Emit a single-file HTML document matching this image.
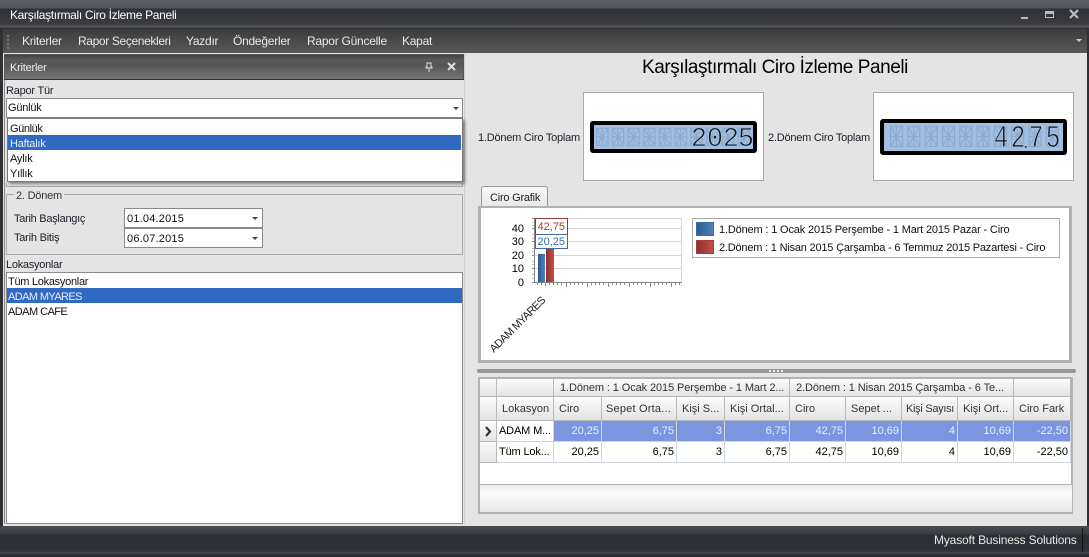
<!DOCTYPE html>
<html><head><meta charset="utf-8"><style>
html,body{margin:0;padding:0;width:1089px;height:557px;overflow:hidden;background:#e4e4e4}
body{position:relative;font-family:"Liberation Sans",sans-serif;font-size:11px;color:#1c1c28;letter-spacing:-.22px}
.a,.t{position:absolute}
.t{white-space:nowrap;line-height:14px}
.b{background:#fff;border:1px solid #8a8a8a;box-sizing:border-box}
.arr{position:absolute;width:0;height:0;border-left:3px solid transparent;border-right:3px solid transparent;border-top:3px solid #444}
.m{top:34px;color:#e8e8e8;font-size:12px;letter-spacing:-.25px}
.c{position:absolute;box-sizing:border-box;border-right:1px solid #cfd6e2;border-bottom:1px solid #cfd6e2;line-height:20px;padding:0 7px;text-align:right;color:#000;overflow:hidden;white-space:nowrap;letter-spacing:0}
.h{position:absolute;box-sizing:border-box;border-right:1px solid #b9b9b9;border-bottom:1px solid #b9b9b9;background:linear-gradient(#fbfbfb,#e4e4e4);line-height:25px;padding-left:5px;color:#333;white-space:nowrap;overflow:hidden;letter-spacing:0}
.s{background:#7b95df;color:#e8eefc}
</style></head><body>
<!-- frame -->
<div class="a" style="left:0;top:0;width:1089px;height:28px;background:linear-gradient(#5c5f63 0,#50535a 8px,#303237 9px,#3a3c41 24px,#55585c 27px,#3a3c40 28px)"></div>
<div class="t" style="left:10px;top:8px;color:#fff;font-size:12px;letter-spacing:-.32px">Karşılaştırmalı Ciro İzleme Paneli</div>
<div class="a" style="left:1021px;top:17px;width:7px;height:2px;background:#bbb"></div>
<div class="a" style="left:1045px;top:11px;width:9px;height:7px;box-sizing:border-box;border:1px solid #bbb;border-top:3px solid #bbb"></div>
<svg class="a" style="left:1069px;top:9px" width="11" height="10"><path d="M1 1L9 9M9 1L1 9" stroke="#bbb" stroke-width="2.2"/></svg>
<div class="a" style="left:0;top:28px;width:1089px;height:529px;background:#2e3035"></div>
<div class="a" style="left:3px;top:29px;width:1084px;height:24px;background:linear-gradient(#3c3c3c,#585858)"></div>
<svg class="a" style="left:7px;top:34px" width="4" height="15"><path d="M1 1v2M1 5v2M1 9v2M1 13v2" stroke="#777" stroke-width="2"/></svg>
<div class="t m" style="left:22px">Kriterler</div>
<div class="t m" style="left:78px;letter-spacing:-.36px">Rapor Seçenekleri</div>
<div class="t m" style="left:186px">Yazdır</div>
<div class="t m" style="left:233px">Öndeğerler</div>
<div class="t m" style="left:307px">Rapor Güncelle</div>
<div class="t m" style="left:402px">Kapat</div>
<div class="arr" style="left:1076px;top:39px;border-top-color:#ccc"></div>
<div class="a" style="left:3px;top:53px;width:1084px;height:473px;background:#e4e4e4"></div>

<!-- left panel -->
<div class="a" style="left:4px;top:54px;width:460px;height:26px;box-sizing:border-box;border:1px solid #555;border-bottom:1px solid #333;background:linear-gradient(#444 0,#5a5a5a 5px,#565656 10px,#747474 100%)"></div>
<div class="t" style="left:10px;top:61px;color:#eee">Kriterler</div>
<svg class="a" style="left:424px;top:62px" width="10" height="11"><path d="M3 1h4v4h1v1H2V5h1zM5 6v4" stroke="#ddd" fill="none"/></svg>
<svg class="a" style="left:446px;top:62px" width="11" height="10"><path d="M2 1L9 8M9 1L2 8" stroke="#ddd" stroke-width="2"/></svg>
<div class="a" style="left:4px;top:80px;width:1px;height:444px;background:#888"></div>
<div class="a" style="left:464px;top:54px;width:1px;height:470px;background:#cfcfcf"></div>
<div class="t" style="left:6px;top:84px">Rapor Tür</div>
<div class="a b" style="left:6px;top:98px;width:457px;height:20px"></div>
<div class="t" style="left:8px;top:101px;color:#111">Günlük</div>
<div class="arr" style="left:453px;top:107px"></div>
<div class="a" style="left:6px;top:183px;width:457px;height:4px;box-sizing:border-box;border:1px solid #aaa;border-top:0"></div>
<div class="a" style="left:7px;top:118px;width:456px;height:64px;box-sizing:border-box;background:#fff;border:1px solid #777;box-shadow:2px 2px 3px rgba(0,0,0,.45)"></div>
<div class="a" style="left:8px;top:135px;width:453px;height:15px;background:#2f69c2"></div>
<div class="t" style="left:10px;top:122px;color:#111;letter-spacing:-.4px">Günlük</div>
<div class="t" style="left:10px;top:137px;color:#e8eeff">Haftalık</div>
<div class="t" style="left:10px;top:152px;color:#111">Aylık</div>
<div class="t" style="left:10px;top:167px;color:#111">Yıllık</div>

<div class="a" style="left:6px;top:194px;width:457px;height:61px;box-sizing:border-box;border:1px solid #aaa"></div>
<div class="t" style="left:14px;top:189px;background:#e4e4e4;padding:0 2px;color:#333">2. Dönem</div>
<div class="t" style="left:14px;top:212px;letter-spacing:-.27px">Tarih Başlangıç</div>
<div class="t" style="left:14px;top:231px">Tarih Bitiş</div>
<div class="a b" style="left:124px;top:208px;width:139px;height:20px"></div>
<div class="a b" style="left:124px;top:228px;width:139px;height:20px"></div>
<div class="t" style="left:127px;top:212px;color:#111;letter-spacing:.2px">01.04.2015</div>
<div class="t" style="left:127px;top:232px;color:#111;letter-spacing:.2px">06.07.2015</div>
<div class="arr" style="left:252px;top:217px"></div>
<div class="arr" style="left:252px;top:237px"></div>
<div class="t" style="left:6px;top:258px;letter-spacing:-.27px">Lokasyonlar</div>
<div class="a b" style="left:6px;top:272px;width:457px;height:252px"></div>
<div class="a" style="left:7px;top:288px;width:455px;height:15px;background:#2f69c2"></div>
<div class="t" style="left:8px;top:275px;color:#111;letter-spacing:-.28px">Tüm Lokasyonlar</div>
<div class="t" style="left:8px;top:290px;color:#e8eeff;letter-spacing:-.6px">ADAM MYARES</div>
<div class="t" style="left:8px;top:305px;color:#111;letter-spacing:-.55px">ADAM CAFE</div>

<!-- right -->
<div class="t" style="left:642px;top:57px;width:266px;text-align:left;font-size:19px;line-height:22px;color:#000;letter-spacing:-.44px">Karşılaştırmalı Ciro İzleme Paneli</div>
<div class="t" style="left:478px;top:131px">1.Dönem Ciro Toplam</div>
<div class="t" style="left:768px;top:131px">2.Dönem Ciro Toplam</div>
<div class="a" style="left:583px;top:92px;width:181px;height:89px;box-sizing:border-box;background:#fff;border:1px solid #aaa"></div>
<div class="a" style="left:873px;top:92px;width:201px;height:89px;box-sizing:border-box;background:#fff;border:1px solid #aaa"></div>
<svg class="a" style="left:0;top:0;letter-spacing:0" width="1089" height="557">
<defs>
<pattern id="g1" patternUnits="userSpaceOnUse" x="596" y="128" width="15.7" height="18"><path d="M.5.5h11.5v17H.5zM.5 9h11.500M6.200.5v17M.5.5L12 17.500M12 .5L.5 17.500" fill="none" stroke="#8cabd0" stroke-width="1.3"/></pattern>
<pattern id="g2" patternUnits="userSpaceOnUse" x="890" y="126" width="17.3" height="21"><path d="M.5.5h12v20H.5zM.5 10.500h12M6.500.5v20M.5.5L12.500 20.500M12.500 .5L.5 20.500" fill="none" stroke="#8cabd0" stroke-width="1.3"/></pattern>
</defs>
<rect x="592" y="123" width="163" height="28" rx="1" fill="#a3bfdf" stroke="#000" stroke-width="4"/>
<rect x="596" y="128" width="157" height="18" fill="url(#g1)"/>
<rect x="882" y="121" width="183" height="32" rx="1" fill="#a3bfdf" stroke="#000" stroke-width="4"/>
<rect x="890" y="126" width="173" height="21" fill="url(#g2)"/>
<g font-family="Liberation Mono" font-size="27" fill="#111" stroke="#a3bfdf" stroke-width=".8" text-anchor="middle">
<text transform="translate(699,146)">2</text>
<text transform="translate(715,146)">0</text>
<text transform="translate(731,146)">2</text>
<text transform="translate(746,146)">5</text>
<text transform="translate(1001,147) scale(.9,1.15)">4</text>
<text transform="translate(1018,147) scale(.9,1.15)">2</text>
<text transform="translate(1036,147) scale(.9,1.15)">7</text>
<text transform="translate(1053,147) scale(.9,1.15)">5</text>
</g>
<rect x="1025" y="146" width="1.500" height="1.500" fill="#111"/>
</svg>
<!-- tab -->
<div class="a" style="left:481px;top:186px;width:67px;height:21px;box-sizing:border-box;border:1px solid #999;border-bottom:0;border-radius:3px 3px 0 0;background:linear-gradient(#f8f8f8,#e8e8e8)"></div>
<div class="t" style="left:490px;top:191px">Ciro Grafik</div>
<div class="a" style="left:478px;top:206px;width:594px;height:157px;box-sizing:border-box;background:#fff;border:3px solid #b2b2b2;border-top-width:2px"></div>
<svg class="a" style="left:0;top:0;letter-spacing:0" width="1089" height="557" font-family="Liberation Sans" font-size="11">
<path d="M535 218.500H682M535 228.500H682M535 241.500H682M535 255.500H682M535 268.500H682M681.500 218V282" stroke="#d6d6d6" fill="none"/>
<path d="M534.500 218V282.500H682" stroke="#888" fill="none"/>
<path d="M532 218.500h2M532 228.500h3M532 241.500h3M532 255.500h3M532 268.500h3M532 282.500h3M533 222v1M533 225v1M533 234v1M533 238v1M533 248v1M533 251v1M533 261v1M533 264v1M533 274v1M533 278v1" stroke="#888"/>
<path d="M537.500 283v2M541.500 283v2M545.500 283v3M549.500 283v2M553.500 283v2M557.500 283v2M561.500 283v2M566.500 283v4M570.500 283v2M574.500 283v2M578.500 283v2M582.500 283v2M587.500 283v4M591.500 283v2M595.500 283v2M599.500 283v2M603.500 283v2M608.500 283v4M612.500 283v2M616.500 283v2M620.500 283v2M624.500 283v2M629.500 283v4M633.500 283v2M637.500 283v2M641.500 283v2M645.500 283v2M650.500 283v4M654.500 283v2M658.500 283v2M662.500 283v2M666.500 283v2M671.500 283v4M675.500 283v2M679.500 283v2" stroke="#888"/>
<defs><linearGradient id="bl"><stop offset="0" stop-color="#2e5a93"/><stop offset="1" stop-color="#4e82bd"/></linearGradient><linearGradient id="rd"><stop offset="0" stop-color="#8f2f2d"/><stop offset="1" stop-color="#c0504d"/></linearGradient></defs>
<rect x="538" y="254" width="7" height="28" fill="url(#bl)"/>
<rect x="546" y="246" width="8" height="36" fill="url(#rd)"/>
<rect x="535.500" y="218.500" width="32" height="16" fill="#fff" stroke="#8f3a38"/>
<rect x="535.500" y="234.500" width="32" height="14" fill="#fff" stroke="#3f6a9e"/>
<text x="537.500" y="230" fill="#a13d3a">42,75</text>
<text x="537.500" y="245" fill="#3a6aa8">20,25</text>
<g text-anchor="end" fill="#000"><text x="524" y="232">40</text><text x="524" y="245">30</text><text x="524" y="259">20</text><text x="524" y="272">10</text><text x="524" y="286">0</text></g>
<text transform="translate(494,353) rotate(-45)" fill="#222" font-size="11" letter-spacing="-.65">ADAM MYARES</text>
<rect x="692.500" y="218.500" width="367" height="39" fill="#fff" stroke="#aaa"/>
<rect x="696.500" y="222.500" width="17" height="13" fill="url(#bl)" stroke="#3a6aa8"/>
<rect x="696.500" y="240.500" width="17" height="13" fill="url(#rd)" stroke="#a13d3a"/>
<text x="719" y="233" fill="#111" letter-spacing="-.16">1.Dönem : 1 Ocak 2015 Perşembe - 1 Mart 2015 Pazar - Ciro</text>
<text x="719" y="251" fill="#111" letter-spacing="-.2">2.Dönem : 1 Nisan 2015 Çarşamba - 6 Temmuz 2015 Pazartesi - Ciro</text>
</svg>
<!-- splitter -->
<div class="a" style="left:477px;top:369px;width:599px;height:4px;background:#979797;border-radius:2px"></div>
<div class="a" style="left:769px;top:370px;width:14px;height:2px;background:repeating-linear-gradient(90deg,#eee 0 2px,#979797 2px 4px)"></div>
<!-- grid -->
<div class="a" style="left:478px;top:377px;width:595px;height:137px;box-sizing:border-box;background:#fff;border:2px solid #b2b2b2"></div>
<div class="h" style="left:480px;top:379px;width:17px;height:18px"></div>
<div class="h" style="left:497px;top:379px;width:57px;height:18px"></div>
<div class="h" style="left:554px;top:379px;width:236px;height:18px;line-height:18px;padding-left:6px;letter-spacing:-.1px">1.Dönem : 1 Ocak 2015 Perşembe - 1 Mart 2...</div>
<div class="h" style="left:790px;top:379px;width:224px;height:18px;line-height:18px;padding-left:6px;letter-spacing:-.1px">2.Dönem : 1 Nisan 2015 Çarşamba - 6 Te...</div>
<div class="h" style="left:1014px;top:379px;width:57px;height:18px"></div>
<div class="h" style="left:480px;top:397px;width:17px;height:24px"></div>
<div class="h" style="left:497px;top:397px;width:57px;height:24px">Lokasyon</div>
<div class="h" style="left:554px;top:397px;width:48px;height:24px">Ciro</div>
<div class="h" style="left:602px;top:397px;width:75px;height:24px;padding-left:4px;letter-spacing:.2px">Sepet Orta...</div>
<div class="h" style="left:677px;top:397px;width:48px;height:24px">Kişi S...</div>
<div class="h" style="left:725px;top:397px;width:65px;height:24px">Kişi Ortal...</div>
<div class="h" style="left:790px;top:397px;width:56px;height:24px">Ciro</div>
<div class="h" style="left:846px;top:397px;width:56px;height:24px">Sepet ...</div>
<div class="h" style="left:902px;top:397px;width:56px;height:24px;padding-left:4px;letter-spacing:-.3px">Kişi Sayısı</div>
<div class="h" style="left:958px;top:397px;width:56px;height:24px">Kişi Ort...</div>
<div class="h" style="left:1014px;top:397px;width:57px;height:24px">Ciro Fark</div>
<div class="h" style="left:480px;top:421px;width:17px;height:21px"></div>
<div class="h" style="left:480px;top:442px;width:17px;height:21px"></div>
<svg class="a" style="left:484px;top:426px" width="9" height="11"><path d="M2 1L6 5.500L2 10" stroke="#333" stroke-width="2.2" fill="none"/></svg>
<div class="c" style="left:497px;top:421px;width:57px;height:21px;text-align:left;padding:0 2px;letter-spacing:-.15px">ADAM M...</div>
<div class="c s" style="left:554px;top:421px;width:48px;height:21px;padding:0 2px">20,25</div>
<div class="c s" style="left:602px;top:421px;width:75px;height:21px;padding:0 2px">6,75</div>
<div class="c s" style="left:677px;top:421px;width:48px;height:21px;padding:0 2px">3</div>
<div class="c s" style="left:725px;top:421px;width:65px;height:21px;padding:0 2px">6,75</div>
<div class="c s" style="left:790px;top:421px;width:56px;height:21px;padding:0 2px">42,75</div>
<div class="c s" style="left:846px;top:421px;width:56px;height:21px;padding:0 2px">10,69</div>
<div class="c s" style="left:902px;top:421px;width:56px;height:21px;padding:0 2px">4</div>
<div class="c s" style="left:958px;top:421px;width:56px;height:21px;padding:0 2px">10,69</div>
<div class="c s" style="left:1014px;top:421px;width:57px;height:21px;padding:0 2px">-22,50</div>
<div class="c" style="left:497px;top:442px;width:57px;height:21px;text-align:left;padding:0 2px;letter-spacing:-.15px">Tüm Lok...</div>
<div class="c" style="left:554px;top:442px;width:48px;height:21px;padding:0 2px">20,25</div>
<div class="c" style="left:602px;top:442px;width:75px;height:21px;padding:0 2px">6,75</div>
<div class="c" style="left:677px;top:442px;width:48px;height:21px;padding:0 2px">3</div>
<div class="c" style="left:725px;top:442px;width:65px;height:21px;padding:0 2px">6,75</div>
<div class="c" style="left:790px;top:442px;width:56px;height:21px;padding:0 2px">42,75</div>
<div class="c" style="left:846px;top:442px;width:56px;height:21px;padding:0 2px">10,69</div>
<div class="c" style="left:902px;top:442px;width:56px;height:21px;padding:0 2px">4</div>
<div class="c" style="left:958px;top:442px;width:56px;height:21px;padding:0 2px">10,69</div>
<div class="c" style="left:1014px;top:442px;width:57px;height:21px;padding:0 2px">-22,50</div>
<div class="a" style="left:480px;top:484px;width:592px;height:28px;box-sizing:border-box;border-top:1px solid #b2b2b2;background:linear-gradient(#ececec,#fafafa 30%,#e8e8e8)"></div>
<!-- status -->
<div class="a" style="left:0;top:526px;width:1089px;height:31px;background:linear-gradient(#484b52 0,#3a3c42 8px,#2c2e33 9px,#2f3136 25px,#45484d 27px,#2c2e33 29px)"></div>
<div class="t" style="left:934px;top:533px;color:#e8e8e8;font-size:12px;letter-spacing:-.16px">Myasoft Business Solutions</div>
<div class="a" style="left:1082px;top:528px;width:1px;height:24px;background:#111"></div>
</body></html>
